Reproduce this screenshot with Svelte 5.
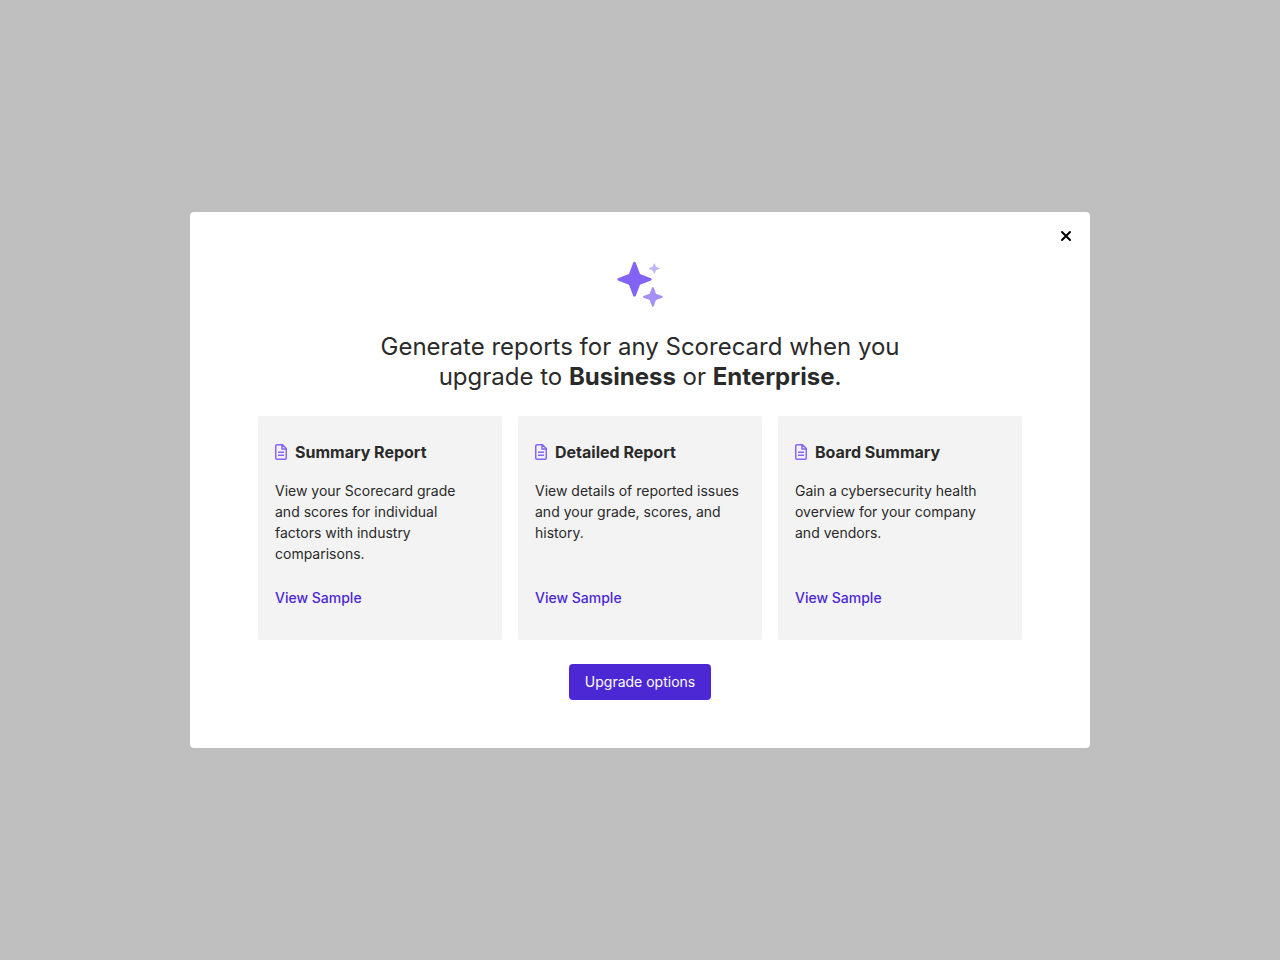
<script>
  const reports = [
    { title: 'Summary Report', text: 'View your Scorecard grade and scores for individual factors with industry comparisons.' },
    { title: 'Detailed Report', text: 'View details of reported issues and your grade, scores, and history.' },
    { title: 'Board Summary', text: 'Gain a cybersecurity health overview for your company and vendors.' }
  ];
</script>

<div class="overlay">
  <div class="modal" role="dialog" aria-modal="true" aria-labelledby="heading">
    <button class="close" type="button" aria-label="Close">
      <svg width="12" height="12" viewBox="0 0 12 12"><path d="M2 2l8 8M10 2l-8 8" stroke="#000" stroke-width="2" stroke-linecap="round" /></svg>
    </button>
    <svg class="sparkles" width="48" height="48" viewBox="0 0 48 48" aria-hidden="true">
      <path fill="#8263f4" d="M17.200 2.700Q18.500 1 19.800 2.700L24 14L35 18.200Q36.500 19.300 35 20.400L24 24.700L19.800 35.800Q18.500 37.500 17.200 35.800L13 24.700L2 20.400Q.5 19.300 2 18.200L13 14Z" />
      <path fill="#a490f6" d="M36 27.500Q36.900 26.500 37.700 27.500L40 33.700L46.300 36.100Q47.300 36.900 46.300 37.700L40 40L37.700 46.200Q36.900 47.200 36 46.200L33.700 40L27.500 37.700Q26.500 36.900 27.500 36.100L33.700 33.700Z" />
      <path fill="#c3b5fa" d="M37.800 3.700Q38.300 3 38.800 3.700L40 6.800L43.200 8Q44 8.500 43.200 9L40 10.200L38.800 13.300Q38.300 14 37.800 13.300L36.600 10.200L33.400 9Q32.700 8.500 33.400 8L36.600 6.800Z" />
    </svg>
    <h1 id="heading">Generate reports for any Scorecard when you upgrade to <strong>Business</strong> or <strong>Enterprise</strong>.</h1>
    <div class="cards">
      {#each reports as report}
        <section class="card">
          <h2>
            <svg width="12" height="16" viewBox="0 0 12 16" fill="none" stroke="#8465ff" stroke-width="1.5" aria-hidden="true">
              <path d="M2 .75H7.500L11.250 4.500V14Q11.250 15.250 10 15.250H2Q.75 15.250 .75 14V2Q.75 .75 2 .75ZM7 1V5H11M3 8.250H9M3 11.250H9" />
            </svg>
            {report.title}
          </h2>
          <p>{report.text}</p>
          <a href="#sample">View Sample</a>
        </section>
      {/each}
    </div>
    <button class="upgrade" type="button">Upgrade options</button>
  </div>
</div>

<style>
  :global(body) { margin: 0; background: #bfbfbf; }
  .overlay {
    min-height: 100vh;
    display: flex;
    align-items: center;
    justify-content: center;
    font-family: Inter, sans-serif;
    font-optical-sizing: none;
    color: #2a2a2a;
  }
  .modal {
    position: relative;
    box-sizing: border-box;
    width: 100%;
    max-width: 900px;
    padding: 48px 68px;
    display: flex;
    flex-direction: column;
    align-items: center;
    gap: 24px;
    background: #fff;
    border-radius: 4px;
  }
  .close {
    position: absolute;
    top: 16px;
    right: 16px;
    width: 16px;
    height: 16px;
    padding: 0;
    border: 0;
    background: none;
    display: grid;
    place-items: center;
    cursor: pointer;
  }
  .sparkles { display: block; }
  h1 {
    margin: 0;
    max-width: 560px;
    font-size: 24px;
    line-height: 30px;
    font-weight: 400;
    text-align: center;
  }
  strong { font-weight: 700; }
  .cards {
    width: 100%;
    display: grid;
    grid-template-columns: repeat(auto-fit, minmax(220px, 1fr));
    gap: 16px;
  }
  .card {
    display: flex;
    flex-direction: column;
    align-items: flex-start;
    padding: 24px 21px 32px 17px;
    background: #f3f3f3;
    border-radius: 2px;
  }
  h2 {
    margin: 0 0 16px;
    display: flex;
    align-items: center;
    gap: 8px;
    font-size: 16px;
    line-height: 24px;
    font-weight: 700;
  }
  p {
    margin: 0 0 24px;
    font-size: 14px;
    line-height: 21px;
  }
  a {
    margin-top: auto;
    font-size: 14px;
    line-height: 20px;
    font-weight: 500;
    color: #4c28d4;
    text-decoration: none;
  }
  .upgrade {
    height: 36px;
    padding: 0 16px;
    border: 0;
    border-radius: 4px;
    background: #4c28d4;
    color: #fff;
    font: 400 14px/20px Inter, sans-serif;
    cursor: pointer;
  }
</style>
